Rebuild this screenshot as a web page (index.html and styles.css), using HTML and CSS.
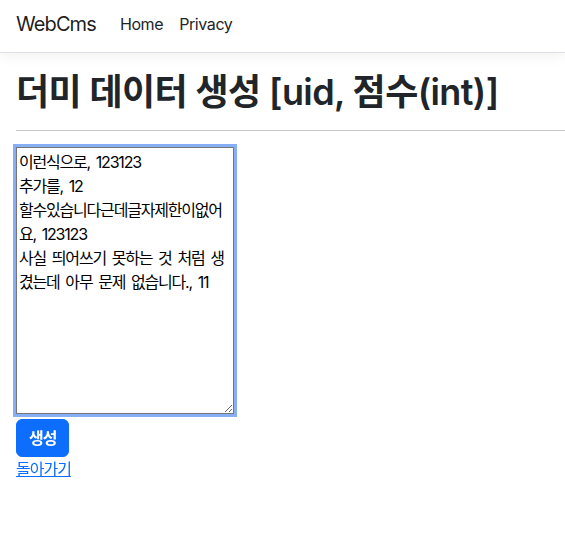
FILE: index.html
```html
<!DOCTYPE html>
<html lang="ko">
<head>
<meta charset="utf-8">
<title>WebCms</title>
<link rel="stylesheet" href="styles.css">
</head>
<body>
<header class="navbar">
  <a class="brand" href="#">WebCms</a>
  <nav class="nav">
    <a class="nav-link" href="#">Home</a>
    <a class="nav-link" href="#">Privacy</a>
  </nav>
</header>
<main class="main">
  <h1 class="title">더미 데이터 생성 [uid, 점수(int)]</h1>
  <hr class="rule">
  <form class="form">
    <textarea class="input" id="data" autofocus>이런식으로, 123123
추가를, 12
할수있습니다근데글자제한이없어요, 123123
사실 띄어쓰기 못하는 것 처럼 생겼는데 아무 문제 없습니다., 11</textarea>
    <button class="btn" type="button">생성</button>
    <a class="back" href="#">돌아가기</a>
  </form>
</main>
<script src="script.js"></script>
</body>
</html>
```

FILE: styles.css
```css
* { box-sizing: border-box; }
html, body { margin: 0; }
body {
  font-family: "Inter", "Noto Sans CJK KR", sans-serif;
  font-size: 16px;
  line-height: 1.5;
  color: #212529;
  background: #fff;
}
.navbar {
  height: 53px;
  display: flex;
  align-items: center;
  padding: 0 16px 4px;
  border-bottom: 1px solid #dee2e6;
  box-shadow: 0 4px 12px rgba(0,0,0,.05);
  margin-bottom: 18px;
}
.brand {
  font-size: 20px;
  line-height: 30px;
  color: rgba(0,0,0,.9);
  text-decoration: none;
  margin-right: 16px;
  letter-spacing: -0.9px;
}
.nav { display: flex; }
.nav-link {
  padding: 0 8px;
  color: #212529;
  text-decoration: none;
  letter-spacing: -0.4px;
}
.main { padding-left: 16px; }
.title {
  margin: 0 0 8px;
  font-size: 36px;
  font-weight: 600;
  line-height: 1.2;
  letter-spacing: -0.6px;
}
.rule {
  margin: 16px 0;
  border: 0;
  border-top: 1px solid #212529;
  opacity: .25;
}
.form { display: flex; flex-direction: column; align-items: flex-start; }
.input {
  width: 218px;
  height: 267px;
  margin: 0;
  padding: 2px 2px;
  border: 1px solid #767676;
  font-family: "Inter", "Noto Sans CJK KR", sans-serif;
  font-size: 16px;
  line-height: 24px;
  letter-spacing: -1.2px;
  word-spacing: 2.5px;
  color: #000;
  caret-color: #000;
  resize: vertical;
  outline: 3px solid #86aff6;
  outline-offset: 0;
}
.btn {
  margin-top: 5px;
  padding: 6px 12px;
  border: 1px solid #0d6efd;
  border-radius: 6px;
  background: #0d6efd;
  color: #fff;
  font-family: inherit;
  font-size: 16px;
  line-height: 24px;
  font-weight: 600;
  letter-spacing: -1px;
}
.back {
  color: #0d6efd;
  text-decoration: underline;
  letter-spacing: -1px;
}
```

FILE: script.js
```js
var ta = document.getElementById('data');
ta.focus();
ta.setSelectionRange(ta.value.length, ta.value.length);
```
